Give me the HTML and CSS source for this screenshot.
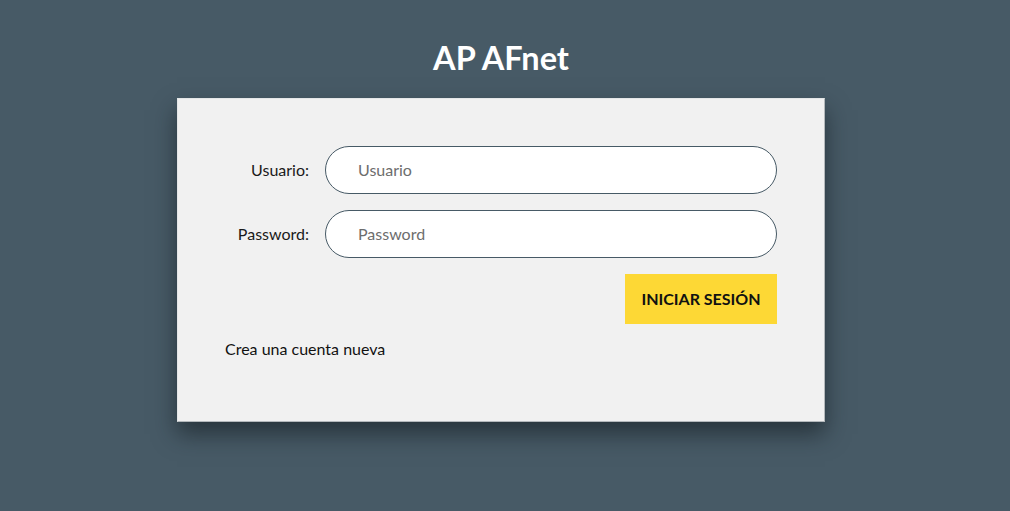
FILE: index.html
```html
<!DOCTYPE html>
<html lang="es">
<head>
<meta charset="utf-8">
<title>AP AFnet</title>
<link rel="stylesheet" href="styles.css">
</head>
<body>
<main class="page">
  <h1 class="title">AP AFnet</h1>
  <section class="card">
    <form class="form">
      <label class="label" for="u">Usuario:</label>
      <input class="input" id="u" type="text" placeholder="Usuario">
      <label class="label" for="p">Password:</label>
      <input class="input" id="p" type="password" placeholder="Password">
      <div class="actions">
        <button class="btn" type="button">INICIAR SESIÓN</button>
      </div>
    </form>
    <a class="link" href="#">Crea una cuenta nueva</a>
  </section>
</main>
</body>
</html>
```
FILE: styles.css
```css
* { box-sizing: border-box; }
html, body { margin: 0; padding: 0; }
body {
  background: #475a66;
  font-family: Lato, "Liberation Sans", sans-serif;
  height: 511px;
  overflow: hidden;
}
.page {
  display: flex;
  flex-direction: column;
  align-items: center;
  padding-top: 38px;
  padding-right: 8px;
}
.title {
  margin: 0 0 20px;
  font-size: 32.5px;
  line-height: 40px;
  font-weight: 700;
  color: #ffffff;
}
.card {
  width: 648px;
  height: 324px;
  background: #f1f1f1;
  border: 1px solid #b4b9bc;
  border-top-color: #e4e6e7;
  border-left-color: #e4e6e7;
  padding: 47px 47px 0;
  box-shadow: 0 12px 22px rgba(20, 28, 34, 0.6);
}
.form {
  display: grid;
  grid-template-columns: 84px 452px;
  column-gap: 16px;
  row-gap: 16px;
  align-items: center;
}
.label {
  text-align: right;
  font-size: 16px;
  color: #1a1a1a;
  margin-top: -2px;
}
.input {
  height: 48px;
  border: 1px solid #475a66;
  border-radius: 24px;
  background: #ffffff;
  padding: 0 32px 2px;
  font-family: inherit;
  font-size: 16px;
  color: #333;
  outline: none;
}
.input::placeholder { color: #6d6d6d; }
.actions {
  grid-column: 1 / 3;
  display: flex;
  justify-content: flex-end;
}
.btn {
  width: 152px;
  height: 50px;
  border: none;
  background: #fdd835;
  font-family: inherit;
  font-weight: 700;
  font-size: 16px;
  color: #111;
  padding: 0 0 2px;
}
.link {
  display: block;
  margin-top: 15px;
  line-height: 20px;
  font-size: 16px;
  color: #111;
  text-decoration: none;
}
```
